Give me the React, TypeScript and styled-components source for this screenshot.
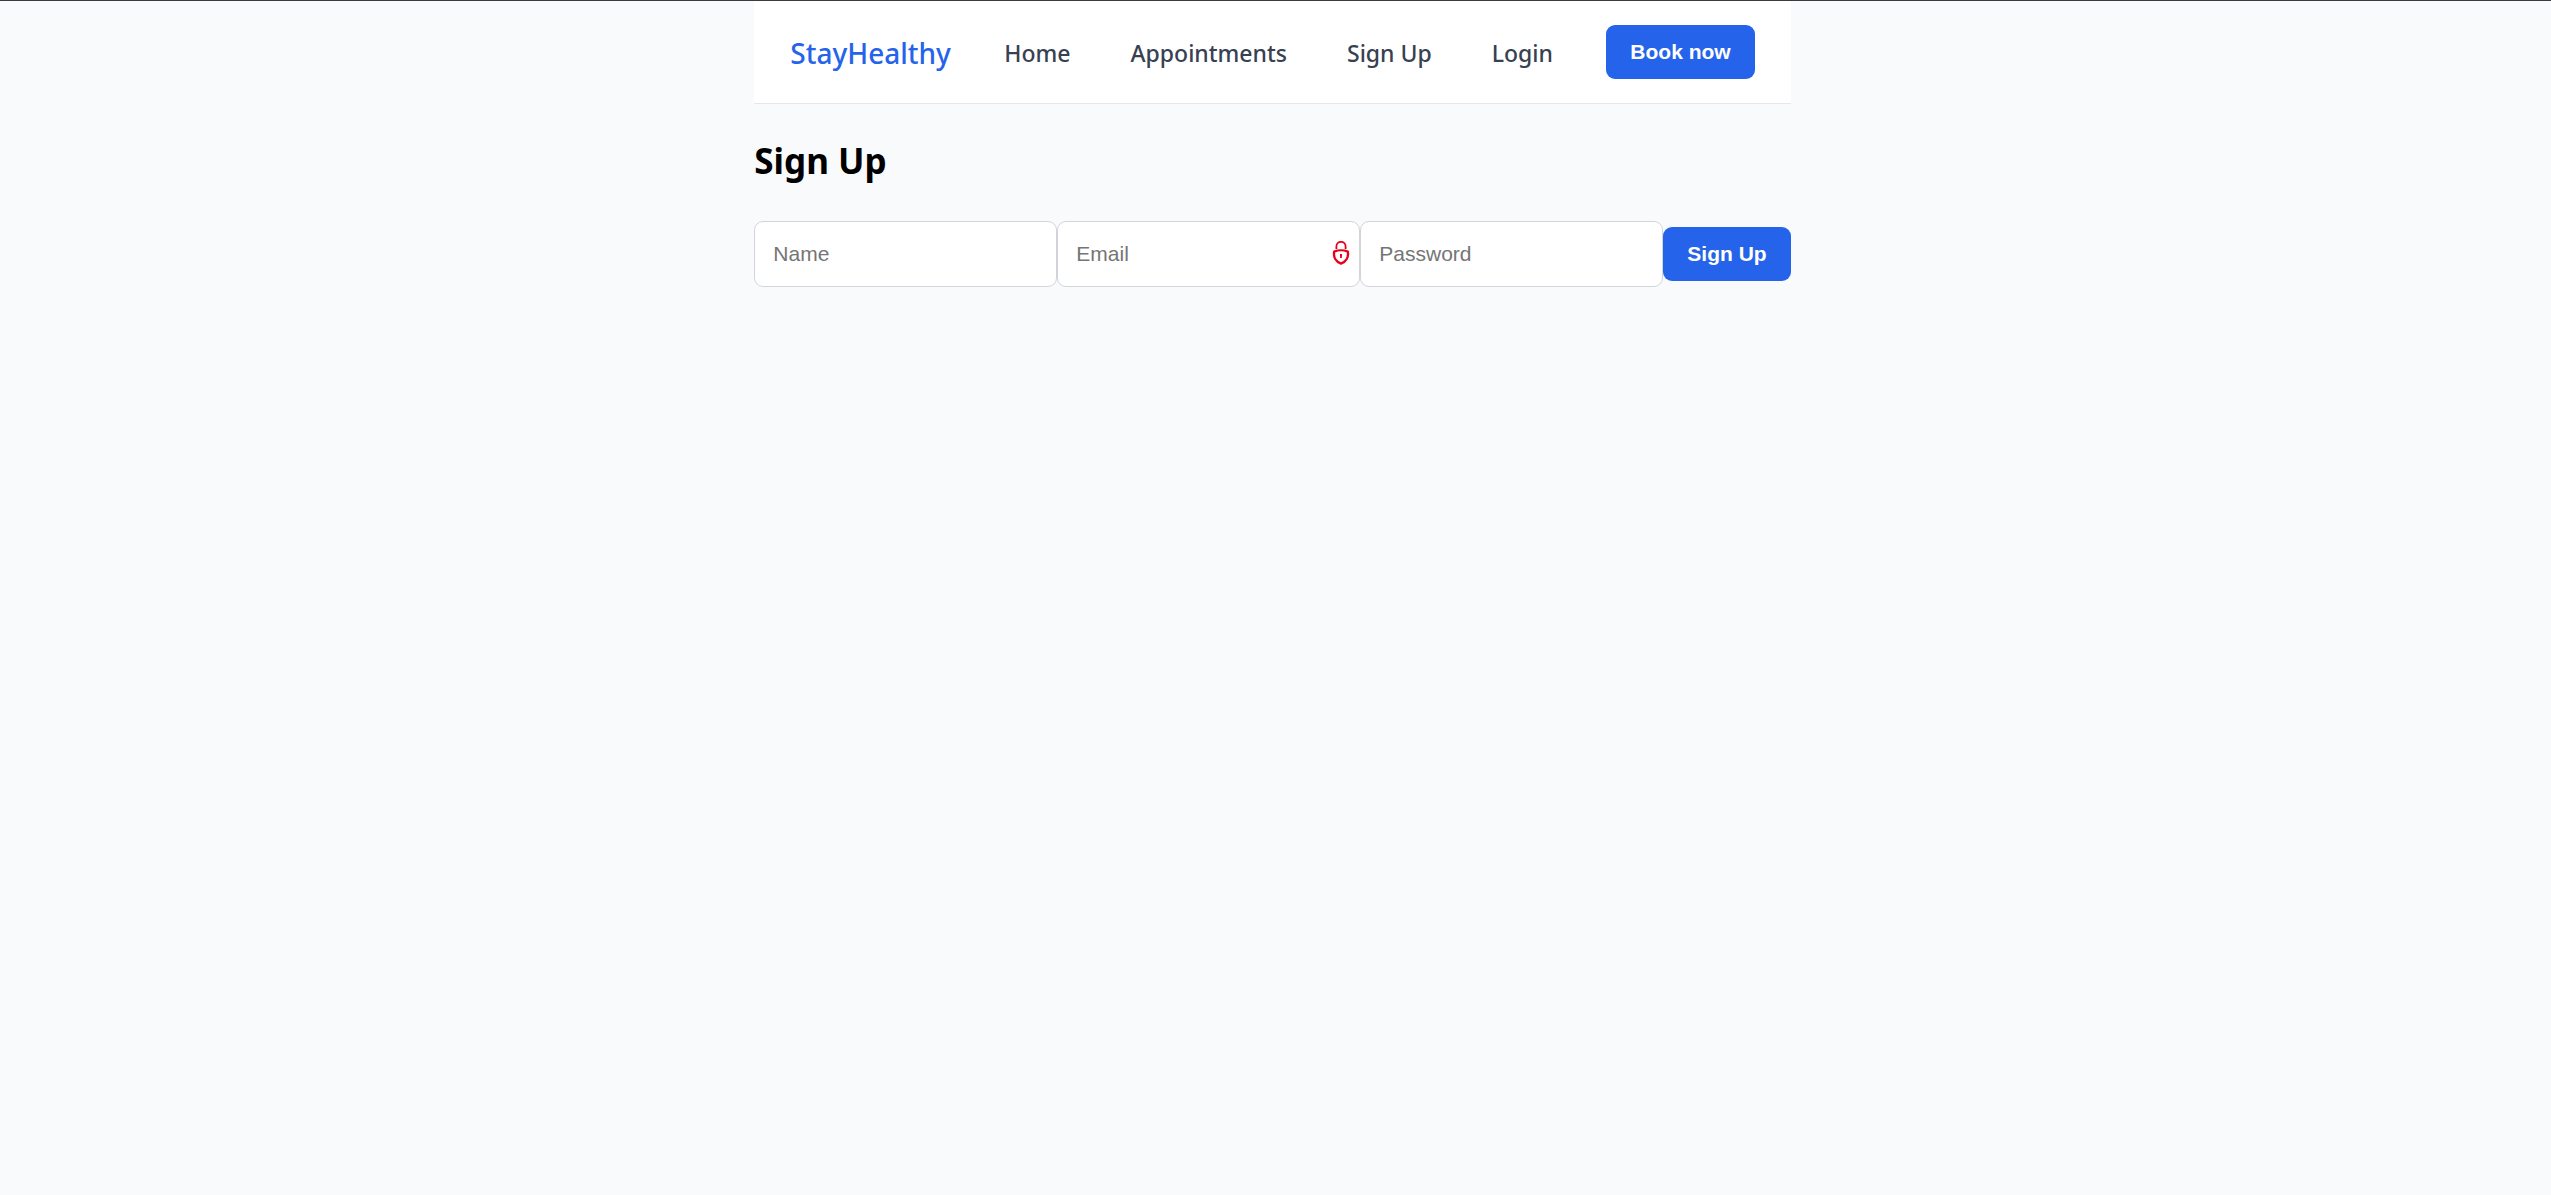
import React from "react";
import styled, { createGlobalStyle } from "styled-components";

const GlobalStyle = createGlobalStyle`
  *, *::before, *::after { box-sizing: border-box; }
  body {
    margin: 0;
    background: #f9fafc;
    color: #000;
    font-family: "Segoe UI", "Noto Sans", "Open Sans", sans-serif;
  }
`;

const Page = styled.div`
  display: flex;
  justify-content: center;
  padding-right: 6px;
`;

const TopRule = styled.div`
  height: 1px;
  background: #3b3a41;
`;

const Shell = styled.div`
  display: flex;
  flex-direction: column;
`;

const Header = styled.header`
  display: flex;
  align-items: center;
  justify-content: space-between;
  padding: 24px 36px;
  background: #fff;
  border-bottom: 1px solid #e5e7eb;
`;

const Brand = styled.a`
  padding-top: 2px;
  color: #2563eb;
  font-size: 28px;
  line-height: 40px;
  font-weight: 500;
  text-decoration: none;
`;

const Nav = styled.nav`
  display: flex;
  gap: 60px;
  padding-top: 2px;
`;

const NavLink = styled.a`
  color: #374151;
  font-size: 23px;
  line-height: 32px;
  font-weight: 500;
  text-decoration: none;
`;

const Button = styled.button`
  height: 54px;
  padding: 0 24px;
  border: 0;
  border-radius: 9px;
  background: #2563eb;
  color: #fff;
  font-family: Arial, "Liberation Sans", sans-serif;
  font-size: 21px;
  font-weight: 700;
  cursor: pointer;
`;

const Title = styled.h1`
  margin: 32px 0 36px;
  font-size: 35px;
  line-height: 49px;
  font-weight: 700;
`;

const Form = styled.form`
  display: flex;
  align-items: center;
`;

const Field = styled.label`
  position: relative;
  display: flex;
`;

const Input = styled.input`
  width: 303px;
  height: 66px;
  padding: 0 18px;
  border: 1px solid #d1d5db;
  border-radius: 9px;
  background: #fff;
  font-family: Arial, "Liberation Sans", sans-serif;
  font-size: 21px;

  &::placeholder {
    color: #757575;
  }
`;

const LockBadge = styled.svg`
  position: absolute;
  top: 20px;
  right: 10px;
  width: 18px;
  height: 24px;
`;

const links = ["Home", "Appointments", "Sign Up", "Login"];

const fields = [
  { label: "Name", type: "text", locked: false },
  { label: "Email", type: "email", locked: true },
  { label: "Password", type: "password", locked: false },
];

function Lock() {
  return (
    <LockBadge viewBox="0 0 18 24" fill="none" stroke="#e8001c" aria-hidden="true">
      <path d="M4.4 8V5.4a4.6 4.6 0 0 1 9.2 0V8" strokeWidth="1.8" />
      <path
        d="M2.2 10.6C6 8.9 12 8.9 15.8 10.6C16.8 16 14.2 20.8 9 22.6C3.8 20.8 1.2 16 2.2 10.6Z"
        strokeWidth="2.4"
        strokeLinejoin="round"
      />
      <path d="M8 14h2M9 13v4" strokeWidth="1.8" />
    </LockBadge>
  );
}

export default function App() {
  return (
    <>
      <GlobalStyle />
      <TopRule />
      <Page>
        <Shell>
          <Header>
            <Brand href="#">StayHealthy</Brand>
            <Nav>
              {links.map((link) => (
                <NavLink key={link} href="#">
                  {link}
                </NavLink>
              ))}
            </Nav>
            <Button type="button">Book now</Button>
          </Header>
          <main>
            <Title>Sign Up</Title>
            <Form onSubmit={(event) => event.preventDefault()}>
              {fields.map(({ label, type, locked }) => (
                <Field key={label}>
                  <Input type={type} placeholder={label} aria-label={label} />
                  {locked && <Lock />}
                </Field>
              ))}
              <Button type="submit">Sign Up</Button>
            </Form>
          </main>
        </Shell>
      </Page>
    </>
  );
}
